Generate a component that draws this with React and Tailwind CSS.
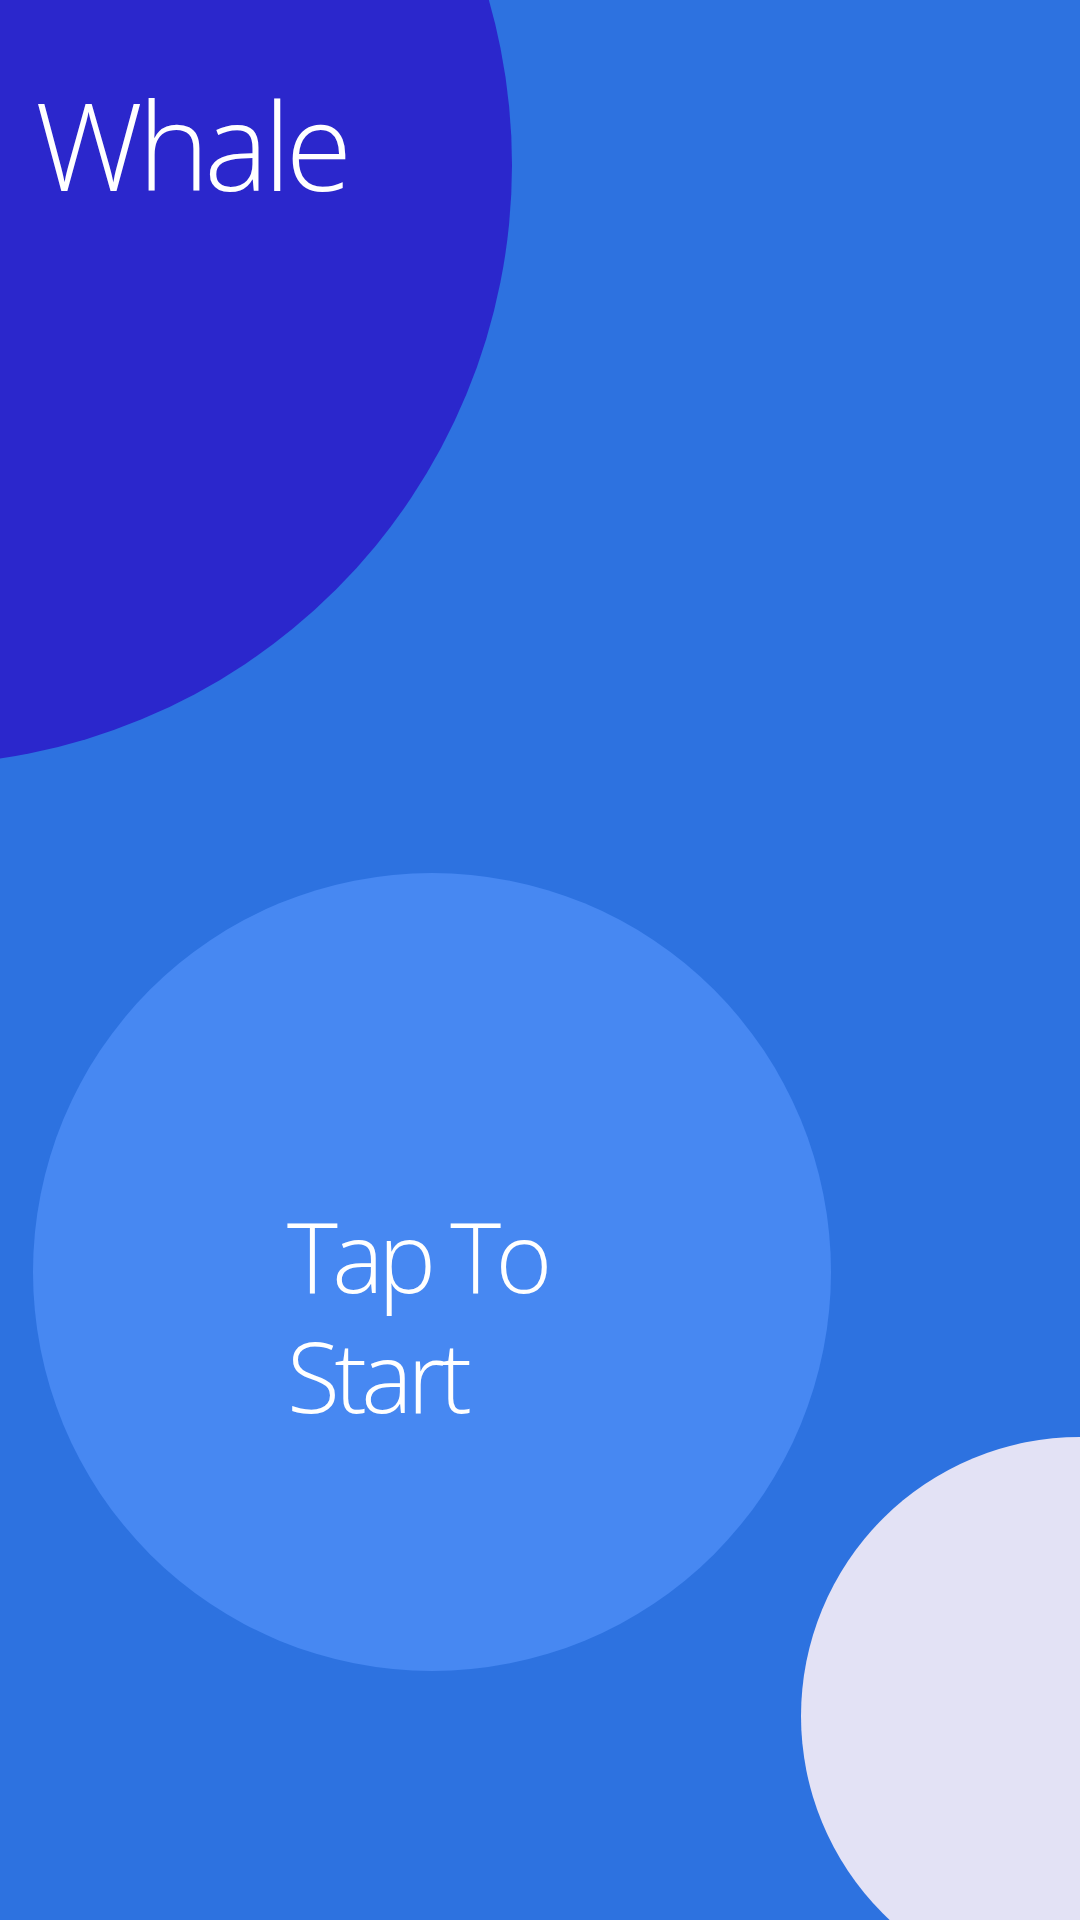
export default function App() {
  return (
    <div
      className="relative w-[1080px] h-[1920px] overflow-hidden bg-[#2d72e0] text-white font-light"
      style={{ fontFamily: '"Open Sans", "Noto Sans", sans-serif' }}
    >
      {/* decorative circles */}
      <div className="absolute left-[-688px] top-[-435px] w-[1200px] h-[1200px] rounded-full bg-[#2b27cc]" />
      <div className="absolute left-[801px] top-[1437px] w-[558px] h-[558px] rounded-full bg-[#e3e2f5]" />

      <div className="relative flex flex-col">
        <h1 className="pt-[83px] pl-[35px] text-[121px] leading-[122px] font-light tracking-[-5px]">Whale</h1>

        <button className="mt-[668px] ml-[33px] w-[798px] h-[798px] rounded-full bg-[#4788f2] flex flex-col items-start pt-[322px] pl-[254px] text-left">
          <span className="text-[97px] leading-[120px] font-light tracking-[-5.5px] w-[320px]">Tap To Start</span>
        </button>
      </div>
    </div>
  );
}
